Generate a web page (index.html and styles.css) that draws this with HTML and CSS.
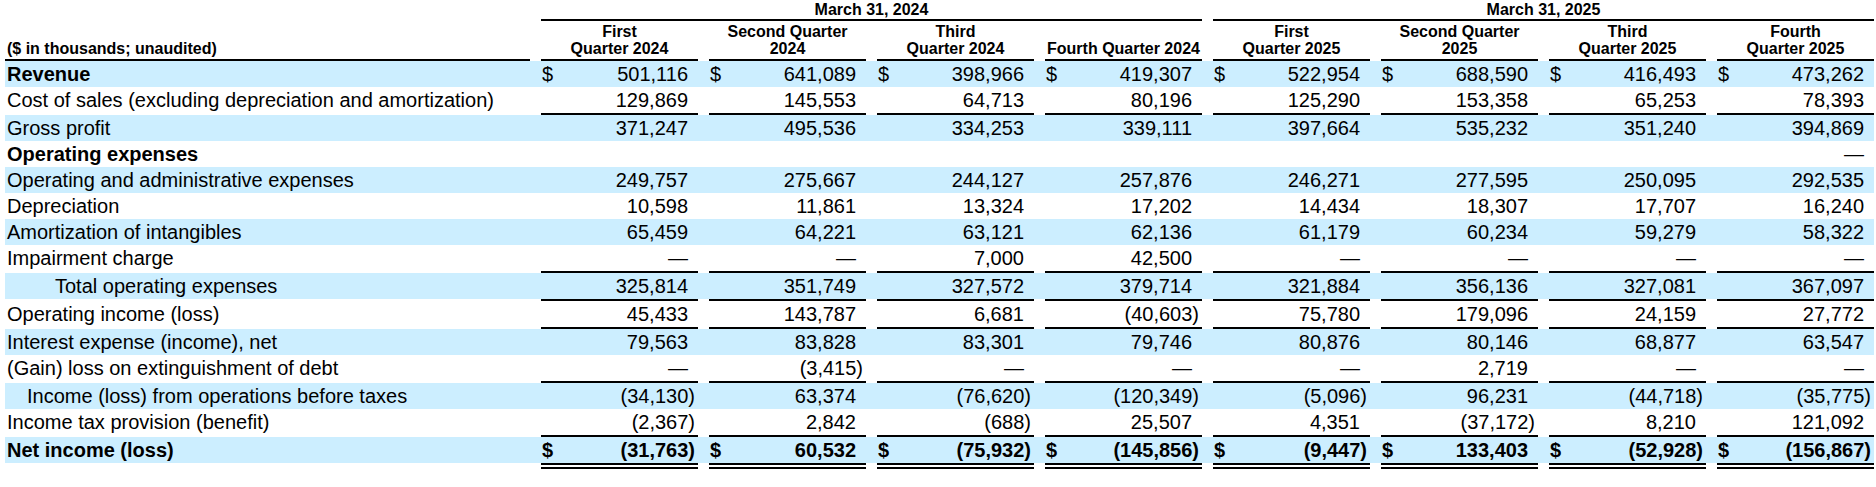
FILE: index.html
```html
<!DOCTYPE html>
<html lang="en">
<head>
<meta charset="utf-8">
<title>Quarterly results</title>
<link rel="stylesheet" href="styles.css">
</head>
<body>
<div class="table">
  <div class="hrow1">
    <div></div>
    <div class="grp">March 31, 2024</div>
    <div class="grp">March 31, 2025</div>
  </div>
  <div class="hrow2">
    <div class="hl">($ in thousands; unaudited)</div>
    <div class="hc">First<br>Quarter 2024</div>
    <div class="hc">Second Quarter<br>2024</div>
    <div class="hc">Third<br>Quarter 2024</div>
    <div class="hc">Fourth Quarter 2024</div>
    <div class="hc">First<br>Quarter 2025</div>
    <div class="hc">Second Quarter<br>2025</div>
    <div class="hc">Third<br>Quarter 2025</div>
    <div class="hc">Fourth<br>Quarter 2025</div>
  </div>
  <div class="rule"><i class="k"></i><i class="k"></i><i class="k"></i><i class="k"></i><i class="k"></i><i class="k"></i><i class="k"></i><i class="k"></i><i class="k"></i></div>

  <div class="row blue">
    <div class="lab b">Revenue</div>
    <div class="c"><span class="d">$</span><span class="v">501,116</span></div>
    <div class="c"><span class="d">$</span><span class="v">641,089</span></div>
    <div class="c"><span class="d">$</span><span class="v">398,966</span></div>
    <div class="c"><span class="d">$</span><span class="v">419,307</span></div>
    <div class="c"><span class="d">$</span><span class="v">522,954</span></div>
    <div class="c"><span class="d">$</span><span class="v">688,590</span></div>
    <div class="c"><span class="d">$</span><span class="v">416,493</span></div>
    <div class="c"><span class="d">$</span><span class="v">473,262</span></div>
  </div>
  <div class="row">
    <div class="lab">Cost of sales (excluding depreciation and amortization)</div>
    <div class="c"><span class="v">129,869</span></div>
    <div class="c"><span class="v">145,553</span></div>
    <div class="c"><span class="v">64,713</span></div>
    <div class="c"><span class="v">80,196</span></div>
    <div class="c"><span class="v">125,290</span></div>
    <div class="c"><span class="v">153,358</span></div>
    <div class="c"><span class="v">65,253</span></div>
    <div class="c"><span class="v">78,393</span></div>
  </div>
  <div class="rule"><i></i><i class="k"></i><i class="k"></i><i class="k"></i><i class="k"></i><i class="k"></i><i class="k"></i><i class="k"></i><i class="k"></i></div>
  <div class="row blue">
    <div class="lab">Gross profit</div>
    <div class="c"><span class="v">371,247</span></div>
    <div class="c"><span class="v">495,536</span></div>
    <div class="c"><span class="v">334,253</span></div>
    <div class="c"><span class="v">339,111</span></div>
    <div class="c"><span class="v">397,664</span></div>
    <div class="c"><span class="v">535,232</span></div>
    <div class="c"><span class="v">351,240</span></div>
    <div class="c"><span class="v">394,869</span></div>
  </div>
  <div class="row">
    <div class="lab b">Operating expenses</div>
    <div class="c"></div>
    <div class="c"></div>
    <div class="c"></div>
    <div class="c"></div>
    <div class="c"></div>
    <div class="c"></div>
    <div class="c"></div>
    <div class="c"><span class="v">—</span></div>
  </div>
  <div class="row blue">
    <div class="lab">Operating and administrative expenses</div>
    <div class="c"><span class="v">249,757</span></div>
    <div class="c"><span class="v">275,667</span></div>
    <div class="c"><span class="v">244,127</span></div>
    <div class="c"><span class="v">257,876</span></div>
    <div class="c"><span class="v">246,271</span></div>
    <div class="c"><span class="v">277,595</span></div>
    <div class="c"><span class="v">250,095</span></div>
    <div class="c"><span class="v">292,535</span></div>
  </div>
  <div class="row">
    <div class="lab">Depreciation</div>
    <div class="c"><span class="v">10,598</span></div>
    <div class="c"><span class="v">11,861</span></div>
    <div class="c"><span class="v">13,324</span></div>
    <div class="c"><span class="v">17,202</span></div>
    <div class="c"><span class="v">14,434</span></div>
    <div class="c"><span class="v">18,307</span></div>
    <div class="c"><span class="v">17,707</span></div>
    <div class="c"><span class="v">16,240</span></div>
  </div>
  <div class="row blue">
    <div class="lab">Amortization of intangibles</div>
    <div class="c"><span class="v">65,459</span></div>
    <div class="c"><span class="v">64,221</span></div>
    <div class="c"><span class="v">63,121</span></div>
    <div class="c"><span class="v">62,136</span></div>
    <div class="c"><span class="v">61,179</span></div>
    <div class="c"><span class="v">60,234</span></div>
    <div class="c"><span class="v">59,279</span></div>
    <div class="c"><span class="v">58,322</span></div>
  </div>
  <div class="row">
    <div class="lab">Impairment charge</div>
    <div class="c"><span class="v">—</span></div>
    <div class="c"><span class="v">—</span></div>
    <div class="c"><span class="v">7,000</span></div>
    <div class="c"><span class="v">42,500</span></div>
    <div class="c"><span class="v">—</span></div>
    <div class="c"><span class="v">—</span></div>
    <div class="c"><span class="v">—</span></div>
    <div class="c"><span class="v">—</span></div>
  </div>
  <div class="rule"><i></i><i class="k"></i><i class="k"></i><i class="k"></i><i class="k"></i><i class="k"></i><i class="k"></i><i class="k"></i><i class="k"></i></div>
  <div class="row blue">
    <div class="lab ind2">Total operating expenses</div>
    <div class="c"><span class="v">325,814</span></div>
    <div class="c"><span class="v">351,749</span></div>
    <div class="c"><span class="v">327,572</span></div>
    <div class="c"><span class="v">379,714</span></div>
    <div class="c"><span class="v">321,884</span></div>
    <div class="c"><span class="v">356,136</span></div>
    <div class="c"><span class="v">327,081</span></div>
    <div class="c"><span class="v">367,097</span></div>
  </div>
  <div class="rule"><i></i><i class="k"></i><i class="k"></i><i class="k"></i><i class="k"></i><i class="k"></i><i class="k"></i><i class="k"></i><i class="k"></i></div>
  <div class="row">
    <div class="lab">Operating income (loss)</div>
    <div class="c"><span class="v">45,433</span></div>
    <div class="c"><span class="v">143,787</span></div>
    <div class="c"><span class="v">6,681</span></div>
    <div class="c"><span class="v neg">(40,603)</span></div>
    <div class="c"><span class="v">75,780</span></div>
    <div class="c"><span class="v">179,096</span></div>
    <div class="c"><span class="v">24,159</span></div>
    <div class="c"><span class="v">27,772</span></div>
  </div>
  <div class="rule"><i></i><i class="k"></i><i class="k"></i><i class="k"></i><i class="k"></i><i class="k"></i><i class="k"></i><i class="k"></i><i class="k"></i></div>
  <div class="row blue">
    <div class="lab">Interest expense (income), net</div>
    <div class="c"><span class="v">79,563</span></div>
    <div class="c"><span class="v">83,828</span></div>
    <div class="c"><span class="v">83,301</span></div>
    <div class="c"><span class="v">79,746</span></div>
    <div class="c"><span class="v">80,876</span></div>
    <div class="c"><span class="v">80,146</span></div>
    <div class="c"><span class="v">68,877</span></div>
    <div class="c"><span class="v">63,547</span></div>
  </div>
  <div class="row">
    <div class="lab">(Gain) loss on extinguishment of debt</div>
    <div class="c"><span class="v">—</span></div>
    <div class="c"><span class="v neg">(3,415)</span></div>
    <div class="c"><span class="v">—</span></div>
    <div class="c"><span class="v">—</span></div>
    <div class="c"><span class="v">—</span></div>
    <div class="c"><span class="v">2,719</span></div>
    <div class="c"><span class="v">—</span></div>
    <div class="c"><span class="v">—</span></div>
  </div>
  <div class="rule"><i></i><i class="k"></i><i class="k"></i><i class="k"></i><i class="k"></i><i class="k"></i><i class="k"></i><i class="k"></i><i class="k"></i></div>
  <div class="row blue">
    <div class="lab ind1">Income (loss) from operations before taxes</div>
    <div class="c"><span class="v neg">(34,130)</span></div>
    <div class="c"><span class="v">63,374</span></div>
    <div class="c"><span class="v neg">(76,620)</span></div>
    <div class="c"><span class="v neg">(120,349)</span></div>
    <div class="c"><span class="v neg">(5,096)</span></div>
    <div class="c"><span class="v">96,231</span></div>
    <div class="c"><span class="v neg">(44,718)</span></div>
    <div class="c"><span class="v neg">(35,775)</span></div>
  </div>
  <div class="row">
    <div class="lab">Income tax provision (benefit)</div>
    <div class="c"><span class="v neg">(2,367)</span></div>
    <div class="c"><span class="v">2,842</span></div>
    <div class="c"><span class="v neg">(688)</span></div>
    <div class="c"><span class="v">25,507</span></div>
    <div class="c"><span class="v">4,351</span></div>
    <div class="c"><span class="v neg">(37,172)</span></div>
    <div class="c"><span class="v">8,210</span></div>
    <div class="c"><span class="v">121,092</span></div>
  </div>
  <div class="rule"><i></i><i class="k"></i><i class="k"></i><i class="k"></i><i class="k"></i><i class="k"></i><i class="k"></i><i class="k"></i><i class="k"></i></div>
  <div class="row blue b">
    <div class="lab">Net income (loss)</div>
    <div class="c"><span class="d">$</span><span class="v neg">(31,763)</span></div>
    <div class="c"><span class="d">$</span><span class="v">60,532</span></div>
    <div class="c"><span class="d">$</span><span class="v neg">(75,932)</span></div>
    <div class="c"><span class="d">$</span><span class="v neg">(145,856)</span></div>
    <div class="c"><span class="d">$</span><span class="v neg">(9,447)</span></div>
    <div class="c"><span class="d">$</span><span class="v">133,403</span></div>
    <div class="c"><span class="d">$</span><span class="v neg">(52,928)</span></div>
    <div class="c"><span class="d">$</span><span class="v neg">(156,867)</span></div>
  </div>
  <div class="rule dbl"><i></i><i class="k"></i><i class="k"></i><i class="k"></i><i class="k"></i><i class="k"></i><i class="k"></i><i class="k"></i><i class="k"></i></div>
</div>
</body>
</html>
```

FILE: styles.css
```css
html, body {
  margin: 0;
  padding: 0;
  background: #ffffff;
}

body {
  font-family: "Liberation Sans", Arial, sans-serif;
  color: #000000;
}

.table {
  padding-left: 5px;
  width: 1869px;
}

.hrow1,
.hrow2,
.row,
.rule {
  display: grid;
  grid-template-columns: 525px repeat(8, 157px);
  column-gap: 11px;
}

.hrow1 {
  height: 21px;
  font-size: 16px;
  font-weight: bold;
}

.grp {
  grid-column: span 4;
  text-align: center;
  line-height: 19px;
  border-bottom: 2px solid #000;
}

.hrow2 {
  height: 38px;
  font-size: 16px;
  font-weight: bold;
  line-height: 17px;
}

.hl {
  align-self: end;
  padding-left: 2px;
  padding-bottom: 2px;
  white-space: nowrap;
}

.hc {
  align-self: end;
  text-align: center;
  padding-bottom: 2px;
}

.rule {
  height: 2px;
}

.rule i {
  display: block;
  height: 2px;
}

.rule .k {
  background: #000;
}

.rule.dbl {
  height: 6px;
}

.rule.dbl i {
  height: 6px;
  box-sizing: border-box;
  background: none;
}

.rule.dbl .k {
  border-top: 6px double #000;
}

.row {
  height: 26px;
  font-size: 20px;
  line-height: 26px;
  white-space: nowrap;
}

.blue {
  background: #cceeff;
}

.b {
  font-weight: bold;
}

.lab {
  padding-left: 2px;
}

.ind1 {
  padding-left: 22px;
}

.ind2 {
  padding-left: 50px;
}

.c {
  display: flex;
  justify-content: flex-end;
}

.d {
  margin-right: auto;
  padding-left: 1px;
}

.v {
  padding-right: 10px;
}

.v.neg {
  padding-right: 3px;
}
```
